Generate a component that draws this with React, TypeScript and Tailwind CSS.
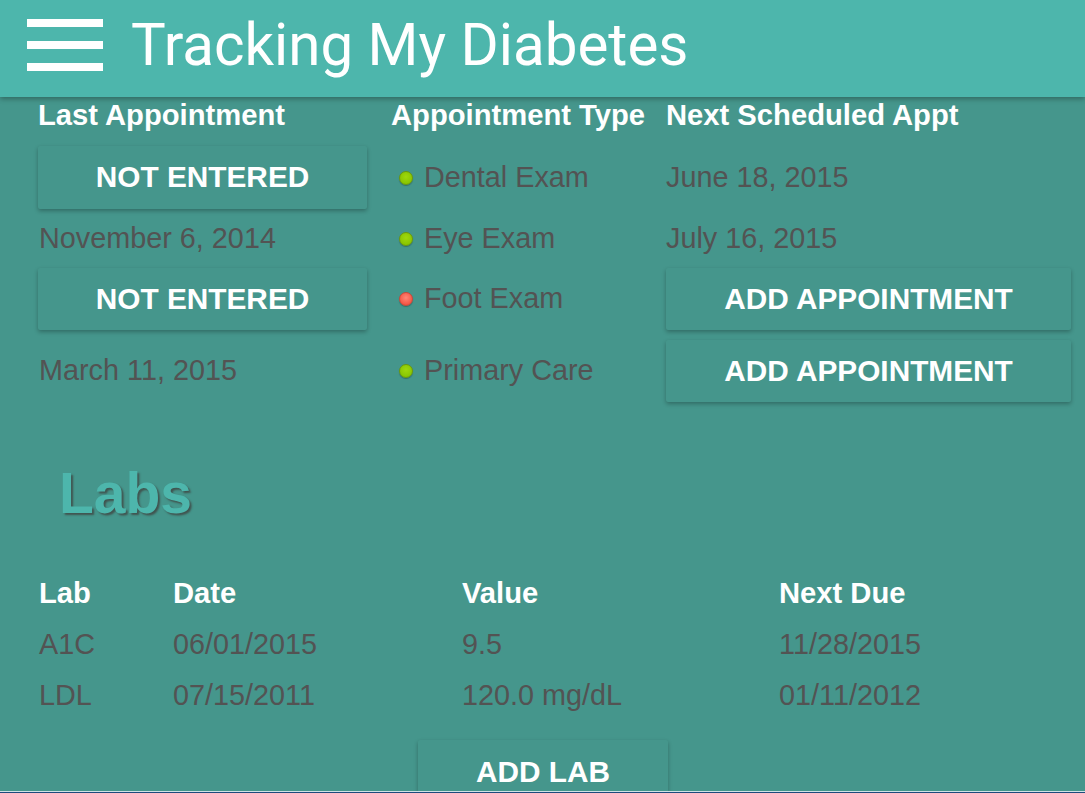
const appointments = [
  { last: null, type: 'Dental Exam', ok: true, next: 'June 18, 2015' },
  { last: 'November 6, 2014', type: 'Eye Exam', ok: true, next: 'July 16, 2015' },
  { last: null, type: 'Foot Exam', ok: false, next: null },
  { last: 'March 11, 2015', type: 'Primary Care', ok: true, next: null },
];

const rowHeights = ['h-[63px]', 'h-[59px]', 'h-[62px]', 'h-[62px] mt-[10px]'];

const labs = [
  { lab: 'A1C', date: '06/01/2015', value: '9.5', due: '11/28/2015' },
  { lab: 'LDL', date: '07/15/2011', value: '120.0 mg/dL', due: '01/11/2012' },
];

function FlatButton({ label, className = '' }: { label: string; className?: string }) {
  return (
    <button
      className={`flex items-center justify-center rounded-[2px] bg-[#45968c] text-[29.8px] font-bold text-white shadow-[0_2px_4px_rgba(0,0,0,0.28)] ${className}`}
    >
      {label}
    </button>
  );
}

function Dot({ ok }: { ok: boolean }) {
  return (
    <span
      className={
        ok
          ? 'block h-[14px] w-[14px] shrink-0 rounded-full border border-[#6b9a0a] bg-[radial-gradient(circle_at_50%_40%,#9fd80c,#86c400_80%)] shadow-[0_1px_1px_rgba(0,0,0,0.25)]'
          : 'block h-[14px] w-[14px] shrink-0 rounded-full border border-[#c8483a] bg-[radial-gradient(circle_at_50%_40%,#ff8676,#f2503f_80%)] shadow-[0_1px_1px_rgba(0,0,0,0.25)]'
      }
    />
  );
}

export default function App() {
  return (
    <div className="flex h-[793px] flex-col overflow-hidden bg-[#45968c] font-['Liberation_Sans',Arial,sans-serif]">
      <header className="relative z-10 flex h-[97px] shrink-0 items-center bg-[#4db6ac] pb-[8px] shadow-[0_2px_5px_rgba(0,0,0,0.3)]">
        <div className="ml-[27px] flex w-[76px] flex-col gap-[14px]">
          <span className="h-[8px] bg-white" />
          <span className="h-[8px] bg-white" />
          <span className="h-[8px] bg-white" />
        </div>
        <h1 className="ml-[28px] font-['Roboto',sans-serif] text-[58.3px] leading-[60px] text-white">
          Tracking My Diabetes
        </h1>
      </header>

      <main className="flex-1 overflow-hidden px-[38px]">
        <div className="grid grid-cols-[329px_251px_405px] gap-x-[24px] text-[28.8px]">
          <div className="flex flex-col">
            <div className="h-[49px] whitespace-nowrap text-[29.2px] font-bold leading-[36px] text-white">Last Appointment</div>
            {appointments.map((a, i) => (
              <div key={i} className={`flex items-center ${rowHeights[i]}`}>
                {a.last ? (
                  <span className="pl-[1px] text-[#535353]">{a.last}</span>
                ) : (
                  <FlatButton label="NOT ENTERED" className="h-full w-full" />
                )}
              </div>
            ))}
          </div>

          <div className="flex flex-col">
            <div className="h-[49px] whitespace-nowrap text-[29.2px] font-bold leading-[36px] text-white">Appointment Type</div>
            {appointments.map((a, i) => (
              <div key={i} className={`flex items-center gap-[11px] pl-[8px] ${rowHeights[i]}`}>
                <Dot ok={a.ok} />
                <span className="whitespace-nowrap text-[#535353]">{a.type}</span>
              </div>
            ))}
          </div>

          <div className="flex flex-col">
            <div className="h-[49px] whitespace-nowrap text-[29.2px] font-bold leading-[36px] text-white">Next Scheduled Appt</div>
            {appointments.map((a, i) => (
              <div key={i} className={`flex items-center ${rowHeights[i]}`}>
                {a.next ? (
                  <span className="text-[#535353]">{a.next}</span>
                ) : (
                  <FlatButton label="ADD APPOINTMENT" className="h-full w-full" />
                )}
              </div>
            ))}
          </div>
        </div>

        <h2 className="mt-[63px] pl-[21px] text-[57px] font-bold leading-[57px] text-[#4db6ac] [text-shadow:2px_2px_2px_rgba(60,30,30,0.55)]">
          Labs
        </h2>

        <table className="mt-[46px] table-fixed border-collapse text-left text-[28.8px]">
          <colgroup>
            <col className="w-[135px]" />
            <col className="w-[289px]" />
            <col className="w-[317px]" />
            <col className="w-[260px]" />
          </colgroup>
          <thead>
            <tr className="h-[51px]">
              <th className="pl-[1px] text-[29.2px] font-bold text-white">Lab</th>
              <th className="text-[29.2px] font-bold text-white">Date</th>
              <th className="text-[29.2px] font-bold text-white">Value</th>
              <th className="text-[29.2px] font-bold text-white">Next Due</th>
            </tr>
          </thead>
          <tbody>
            {labs.map((l) => (
              <tr key={l.lab} className="h-[51px] text-[#535353]">
                <td className="pl-[1px]">{l.lab}</td>
                <td>{l.date}</td>
                <td>{l.value}</td>
                <td>{l.due}</td>
              </tr>
            ))}
          </tbody>
        </table>

        <div className="mt-[19px] flex pl-[380px]">
          <FlatButton label="ADD LAB" className="h-[64px] w-[250px]" />
        </div>
      </main>

      <div className="h-[2px] shrink-0 border-t border-[#cfe3e6] bg-[#1d4b7c]" />
    </div>
  );
}
